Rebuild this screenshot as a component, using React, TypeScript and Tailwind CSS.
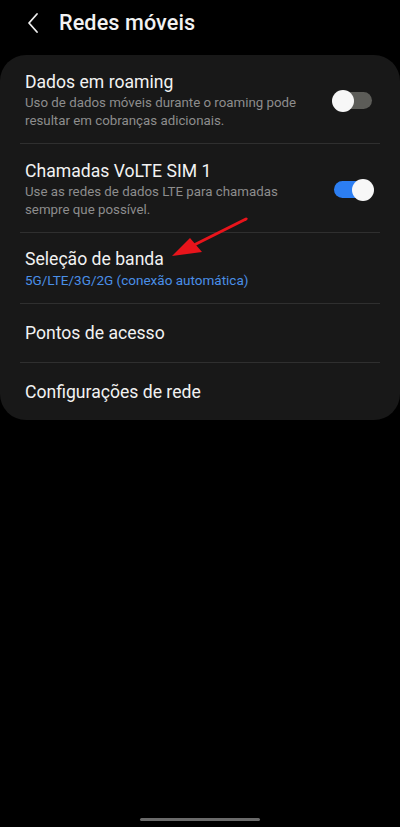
import React from 'react';

const Toggle: React.FC<{ on: boolean }> = ({ on }) => (
  <div className={`relative h-[17px] w-[38px] rounded-full ${on ? 'bg-[#2c7ef2]' : 'bg-[#5c5c58]'}`}>
    <div
      className={`absolute top-1/2 h-[22px] w-[22px] -translate-y-1/2 rounded-full bg-[#f7f7f7] ${on ? 'right-[-2px]' : 'left-[-2px]'}`}
    />
  </div>
);

const Divider = () => <div className="mx-5 h-px bg-[#2f2f2f]" />;

const App: React.FC = () => {
  return (
    <div className="relative h-[827px] w-[400px] overflow-hidden bg-black font-['Roboto',sans-serif] text-[#f2f2f2]">
      <div className="flex h-[44px] items-center pl-[26px] pt-[2px]">
        <svg width="14" height="22" viewBox="0 0 14 22" fill="none">
          <path d="M11 2 L3 11 L11 20" stroke="#eeeeee" strokeWidth="1.8" strokeLinecap="round" strokeLinejoin="round" />
        </svg>
        <h1 className="ml-[19px] text-[21.6px] font-medium tracking-[0.1px]">Redes móveis</h1>
      </div>

      <div className="mt-[11px] rounded-[26px] bg-[#181818]">
        <div className="flex items-center pb-[13px] pl-[25px] pr-[28px] pt-[16px]">
          <div className="flex-1">
            <div className="text-[17.6px] leading-[22px]">Dados em roaming</div>
            <div className="mt-[1px] text-[13.3px] leading-[18px] text-[#8d8d8d]">
              Uso de dados móveis durante o roaming pode resultar em cobranças adicionais.
            </div>
          </div>
          <div className="ml-4">
            <Toggle on={false} />
          </div>
        </div>
        <Divider />
        <div className="flex items-center pb-[13px] pl-[25px] pr-[28px] pt-[16px]">
          <div className="flex-1">
            <div className="text-[17.6px] leading-[22px]">Chamadas VoLTE SIM 1</div>
            <div className="mt-[1px] text-[13.3px] leading-[18px] text-[#8d8d8d]">
              Use as redes de dados LTE para chamadas sempre que possível.
            </div>
          </div>
          <div className="ml-4">
            <Toggle on={true} />
          </div>
        </div>
        <Divider />
        <div className="relative pb-[14px] pl-[25px] pr-[28px] pt-[15px]">
          <div className="text-[17.6px] leading-[22px]">Seleção de banda</div>
          <div className="mt-[1px] text-[13.5px] leading-[18px] text-[#4a8fe7]">5G/LTE/3G/2G (conexão automática)</div>
          <svg className="absolute left-[168px] top-[-17px]" width="82" height="48" viewBox="0 0 82 48" fill="none">
            <path d="M78 3 L22 31" stroke="#e8141b" strokeWidth="3" strokeLinecap="round" />
            <path d="M4 40 L34 36 L22 22 Z" fill="#e8141b" />
          </svg>
        </div>
        <Divider />
        <div className="py-[18px] pl-[25px] text-[17.6px] leading-[22px]">Pontos de acesso</div>
        <Divider />
        <div className="pb-[17px] pt-[18px] pl-[25px] text-[17.6px] leading-[22px]">Configurações de rede</div>
      </div>

      <div className="absolute bottom-[6px] left-1/2 h-[3px] w-[120px] -translate-x-1/2 rounded-full bg-[#6a6a6a]" />
    </div>
  );
};

export default App;
